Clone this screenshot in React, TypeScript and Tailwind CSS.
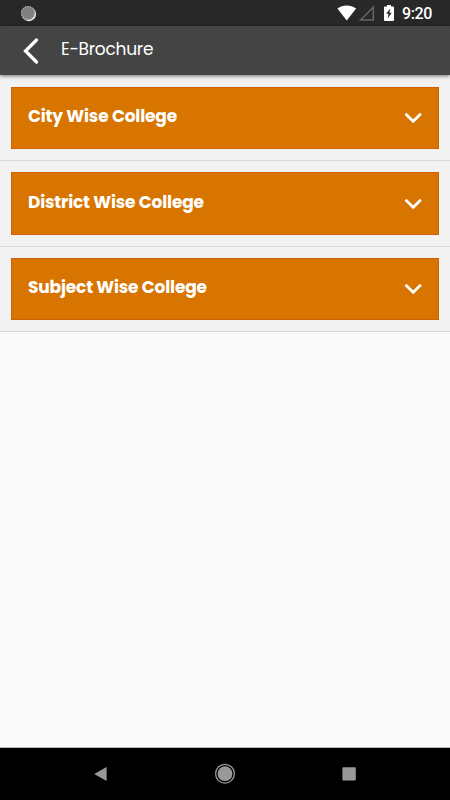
import { useState } from "react"

const sections = [
  { title: "City Wise College", row: "h-[86px] pt-3", card: "h-[62px]", label: "pb-1" },
  { title: "District Wise College", row: "h-[86px] pt-[11px]", card: "h-[63px]", label: "pb-[3px]" },
  { title: "Subject Wise College", row: "h-[85px] pt-[11px]", card: "h-[62px]", label: "pb-1" },
]

function StatusBar() {
  return (
    <div className="flex h-[26px] shrink-0 items-center bg-[#282828] pl-5">
      <svg width="17" height="17" viewBox="0 0 17 17">
        <circle cx="8.9" cy="9" r="7.2" fill="#f5f5f5" />
        <circle cx="8" cy="8" r="7" fill="#808080" />
        <circle cx="8" cy="8" r="6.4" fill="none" stroke="#b0b0b0" strokeWidth="1.2" strokeDasharray="1 1.4" />
      </svg>
      <svg className="ml-auto" width="20" height="16" viewBox="0 0 20 16">
        <path d="M.4 3.5C6 -.6 13.5 -.6 19.1 3.5L9.75 15.5Z" fill="#fff" />
      </svg>
      <svg className="ml-[2px]" width="16" height="16" viewBox="0 0 16 16">
        <path d="M14.3 2.2V14.9H1.6Z" fill="none" stroke="#656565" strokeWidth="1.5" />
      </svg>
      <svg className="ml-[9px]" width="10" height="16" viewBox="0 0 10 16">
        <path d="M3 0H7V1.4H9Q10 1.4 10 2.4V15Q10 16 9 16H1Q0 16 0 15V2.4Q0 1.4 1 1.4H3Z" fill="#fff" />
        <path d="M6.2 3.4L2.2 8.8H4.5L3.7 13.4L7.7 7.7H5.4Z" fill="#282828" />
      </svg>
      <span className="mt-[2px] mr-[17px] ml-2 w-[31px] font-['Roboto',sans-serif] text-base font-medium leading-5 tracking-[-0.4px] text-white">9:20</span>
    </div>
  )
}

function Header() {
  return (
    <header className="relative z-10 flex h-[49px] shrink-0 items-center bg-[#444444] shadow-[0_1px_4px_rgba(0,0,0,0.55)]">
      <button aria-label="Back" className="ml-[22px]">
        <svg width="18" height="28" viewBox="0 0 18 28">
          <path d="M14.5 3L3.5 14L14.5 25" fill="none" stroke="#fff" strokeWidth="3.3" strokeLinecap="round" />
        </svg>
      </button>
      <h1 className="ml-[21px] pb-[3px] font-['Poppins','Inter',sans-serif] text-[17px] leading-6 tracking-[-0.25px] text-white">E-Brochure</h1>
    </header>
  )
}

export default function App() {
  const [open, setOpen] = useState<string | null>(null)

  return (
    <div className="flex h-[800px] w-[450px] flex-col overflow-hidden bg-[#fafafa]">
      <StatusBar />
      <Header />

      <main className="flex-1 border-b border-[#b5b5b5]">
        {sections.map((section) => (
          <div key={section.title} className={`border-b border-[#d9d9d9] bg-[#f2f2f2] px-[11px] ${section.row}`}>
            <button
              aria-expanded={open === section.title}
              onClick={() => setOpen(open === section.title ? null : section.title)}
              className={`flex w-full items-center justify-between border border-[#d16007] bg-[#d77500] pr-4 pl-4 ${section.card}`}
            >
              <span className={`font-['Poppins','Inter',sans-serif] text-[17px] leading-6 font-bold tracking-[-0.18px] text-white ${section.label}`}>
                {section.title}
              </span>
              <svg width="18" height="12" viewBox="0 0 18 12">
                <path d="M1.5 1.8L9.2 9.3L16.9 1.8" fill="none" stroke="#fff" strokeWidth="2.7" />
              </svg>
            </button>
          </div>
        ))}
      </main>

      <nav className="flex h-[52px] shrink-0 items-center justify-between bg-black pr-[94px] pl-[94px]">
        <button aria-label="Back">
          <svg width="13" height="16" viewBox="0 0 13 16">
            <path d="M12.6 1V15L.2 8Z" fill="#999" />
          </svg>
        </button>
        <button aria-label="Home">
          <svg width="22" height="22" viewBox="0 0 22 22">
            <circle cx="11" cy="10.7" r="9.4" fill="none" stroke="#999" strokeWidth="1.3" />
            <circle cx="11" cy="10.7" r="7.4" fill="#999" />
          </svg>
        </button>
        <button aria-label="Recent apps">
          <svg width="14" height="14" viewBox="0 0 14 14">
            <rect x=".4" y=".2" width="13.4" height="13.4" rx="1" fill="#999" />
          </svg>
        </button>
      </nav>
    </div>
  )
}
